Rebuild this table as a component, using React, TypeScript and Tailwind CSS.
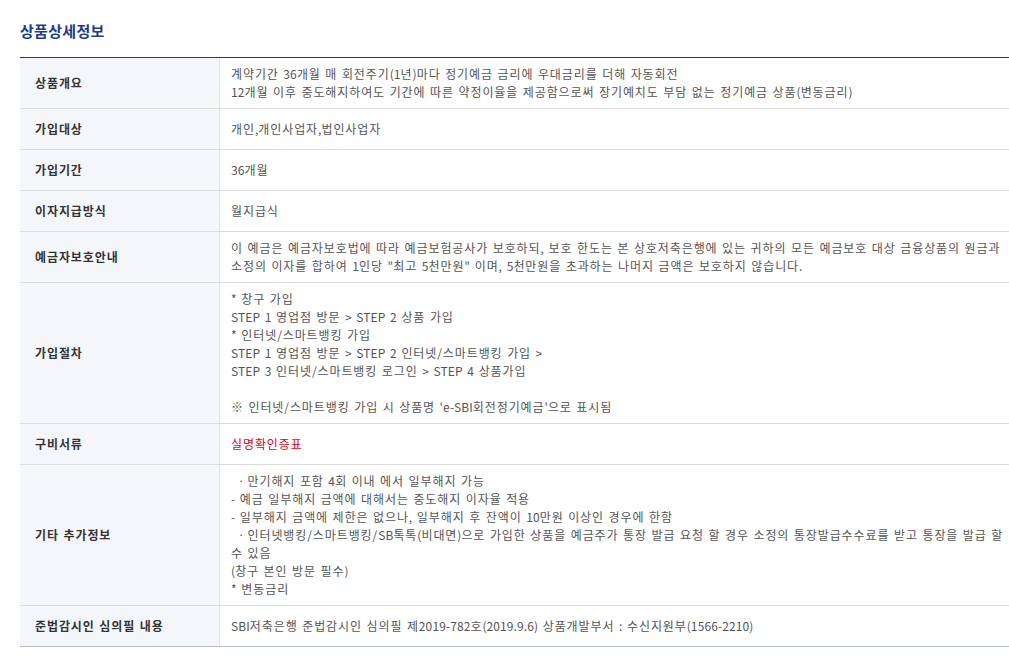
import type { ReactNode } from "react";

// hangul runs get the wider tracking, latin/digits a lighter one
function T({ text }: { text: string }) {
  const parts = text.split(/([A-Za-z0-9().,:\-'"<>=*]+)/);
  return (
    <>
      {parts.map((p, i) =>
        i % 2 === 1 ? (
          <span key={i} className="tracking-[0.1px]">{p}</span>
        ) : (
          <span key={i}>{p}</span>
        )
      )}
    </>
  );
}

const rows: { label: string; lines: ReactNode[] }[] = [
  {
    label: "상품개요",
    lines: [
      "계약기간 36개월 매 회전주기(1년)마다 정기예금 금리에 우대금리를 더해 자동회전",
      "12개월 이후 중도해지하여도 기간에 따른 약정이율을 제공함으로써 장기예치도 부담 없는 정기예금 상품(변동금리)",
    ],
  },
  { label: "가입대상", lines: ["개인,개인사업자,법인사업자"] },
  { label: "가입기간", lines: ["36개월"] },
  { label: "이자지급방식", lines: ["월지급식"] },
  {
    label: "예금자보호안내",
    lines: [
      "이 예금은 예금자보호법에 따라 예금보험공사가 보호하되, 보호 한도는 본 상호저축은행에 있는 귀하의 모든 예금보호 대상 금융상품의 원금과",
      "소정의 이자를 합하여 1인당 \"최고 5천만원\" 이며, 5천만원을 초과하는 나머지 금액은 보호하지 않습니다.",
    ],
  },
  {
    label: "가입절차",
    lines: [
      "* 창구 가입",
      "STEP 1 영업점 방문 > STEP 2 상품 가입",
      "* 인터넷/스마트뱅킹 가입",
      "STEP 1 영업점 방문 > STEP 2 인터넷/스마트뱅킹 가입 >",
      "STEP 3 인터넷/스마트뱅킹 로그인 > STEP 4 상품가입",
      "\u00a0",
      "※ 인터넷/스마트뱅킹 가입 시 상품명 'e-SBI회전정기예금'으로 표시됨",
    ],
  },
  {
    label: "구비서류",
    lines: [<span className="text-[#e60012]">실명확인증표</span>],
  },
  {
    label: "기타 추가정보",
    lines: [
      "\u00a0ㆍ만기해지 포함 4회 이내 에서 일부해지 가능",
      "- 예금 일부해지 금액에 대해서는 중도해지 이자율 적용",
      "- 일부해지 금액에 제한은 없으나, 일부해지 후 잔액이 10만원 이상인 경우에 한함",
      "\u00a0ㆍ인터넷뱅킹/스마트뱅킹/SB톡톡(비대면)으로 가입한 상품을 예금주가 통장 발급 요청 할 경우 소정의 통장발급수수료를 받고 통장을 발급 할",
      "수 있음",
      "(창구 본인 방문 필수)",
      "* 변동금리",
    ],
  },
  {
    label: "준법감시인 심의필 내용",
    lines: ["SBI저축은행 준법감시인 심의필 제2019-782호(2019.9.6) 상품개발부서 : 수신지원부(1566-2210)"],
  },
];

export default function App() {
  return (
    <div
      className="min-h-screen bg-white pl-5 pt-[21px]"
      style={{ fontFamily: '"Noto Sans CJK KR", "Liberation Sans", sans-serif' }}
    >
      <h2 className="text-[15px] leading-[20px] font-bold text-[#1f3a8c] tracking-[0.3px]">상품상세정보</h2>

      <div className="mt-[16px] border-t border-[#1d3b78] border-b border-b-[#b4bdd2]">
        {rows.map((row, i) => (
          <div
            key={row.label}
            className={`grid grid-cols-[200px_1fr] ${i < rows.length - 1 ? "border-b border-[#dcdcdc]" : ""}`}
          >
            <div className="flex items-center bg-[#f5f6fa] border-r border-[#e3e3e3] pl-[15px] text-[12px] font-bold text-[#333] tracking-[0.9px] [word-spacing:1px]">
              {row.label}
            </div>
            <div className="min-h-[40px] flex flex-col justify-center pl-[11px] pr-[10px] py-[7px] text-[12px] leading-[18px] text-[#555] tracking-[0.9px] [word-spacing:1px]">
              {row.lines.map((line, idx) => (
                <div key={idx} className="whitespace-pre">
                  {typeof line === "string" ? <T text={line} /> : line}
                </div>
              ))}
            </div>
          </div>
        ))}
      </div>
    </div>
  );
}
